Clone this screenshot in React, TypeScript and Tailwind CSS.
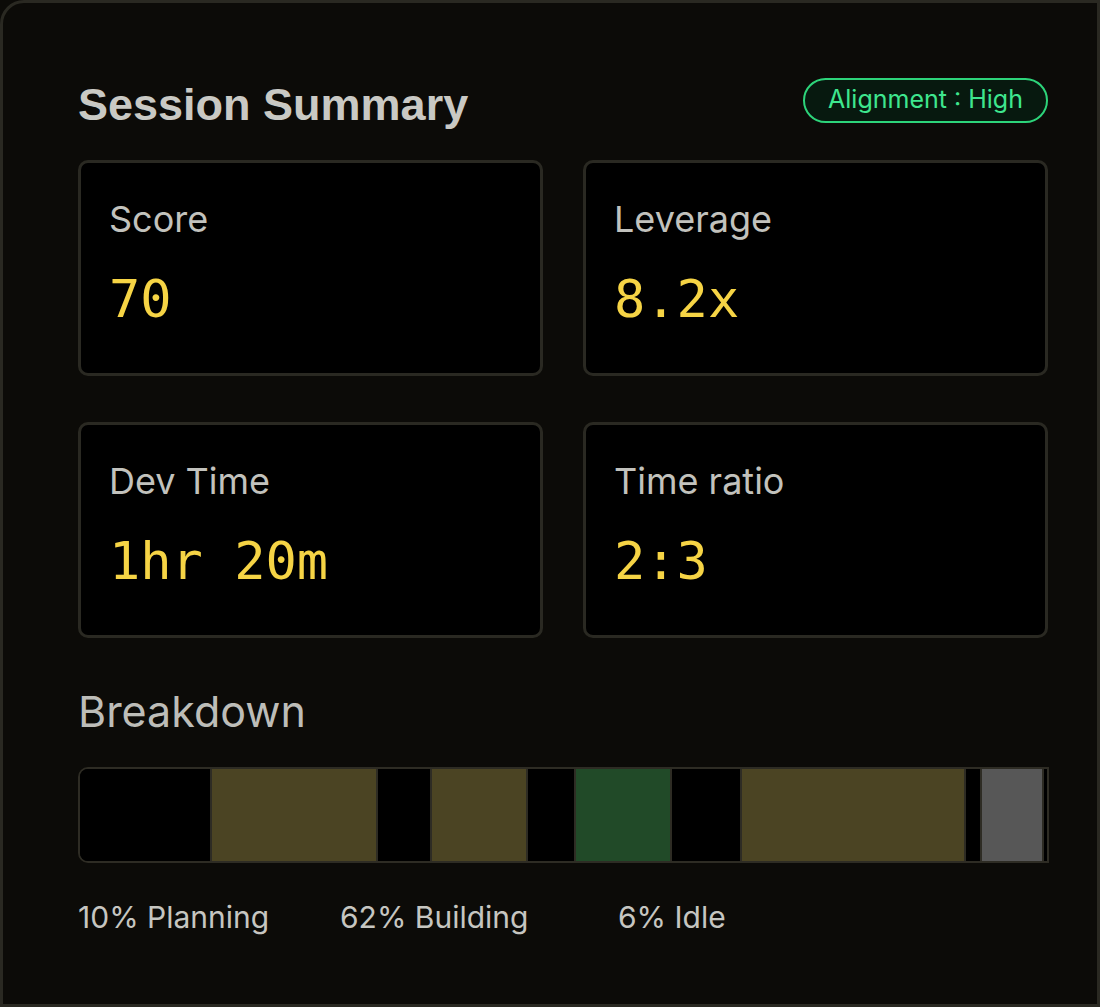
import React from "react";

const segments = [
  { w: 130, c: "bg-black" },
  { w: 166, c: "bg-[#4b4423]" },
  { w: 54, c: "bg-black" },
  { w: 96, c: "bg-[#4b4423]" },
  { w: 48, c: "bg-black" },
  { w: 96, c: "bg-[#214a28]" },
  { w: 70, c: "bg-black" },
  { w: 224, c: "bg-[#4b4423]" },
  { w: 16, c: "bg-black" },
  { w: 62, c: "bg-[#575757]" },
  { w: 5, c: "bg-black" },
];

function Card({ label, value }: { label: string; value: string }) {
  return (
    <div className="h-[216px] rounded-[10px] border-[3px] border-[#2a2922] bg-black pl-[28px] pt-[34px]">
      <div className="text-[36px] leading-[44px] text-[#c2c2bd] [font-family:Inter,sans-serif]">
        {label}
      </div>
      <div className="mt-[28px] text-[52px] leading-[60px] text-[#f6d445] [font-family:'DejaVu_Sans_Mono',monospace]">
        {value}
      </div>
    </div>
  );
}

export default function App() {
  return (
    <div className="h-[1007px] w-[1100px] overflow-hidden bg-[#0c0b08]">
      <div className="h-[1007px] w-[1100px] rounded-tl-[24px] border-[3px] border-[#2a2922] bg-[#0c0b08] pl-[75px] pr-[49px] pt-[72px] [font-family:Inter,sans-serif]">
        <div className="flex h-[60px] items-center justify-between">
          <div className="text-[45px] font-bold leading-[60px] text-[#c9c9c4] [font-family:'Liberation_Sans',Arial,sans-serif]">
            Session Summary
          </div>
          <div className="mt-[-10px] flex h-[45px] w-[245px] items-center justify-center rounded-full border-2 border-[#2dd47a] bg-[#07190f] text-[25px] text-[#3ee68e]">
            Alignment : High
          </div>
        </div>
        <div className="mt-[25px] grid grid-cols-2 gap-x-[40px] gap-y-[46px]">
          <Card label="Score" value="70" />
          <Card label="Leverage" value="8.2x" />
          <Card label="Dev Time" value="1hr 20m" />
          <Card label="Time ratio" value="2:3" />
        </div>
        <div className="mt-[45px] text-[43px] leading-[56px] text-[#bdbdb8]">Breakdown</div>
        <div className="mt-[28px] flex h-[96px] w-[971px] overflow-hidden rounded-l-[10px] border-2 border-[#2e2c24] bg-black">
          {segments.map((s, i) => (
            <div
              key={i}
              className={`h-full shrink-0 ${s.c} ${i > 0 ? "border-l-2 border-[#2e2c24]" : ""}`}
              style={{ width: s.w }}
            />
          ))}
        </div>
        <div className="mt-[34px] flex text-[30px] leading-[40px] text-[#c6c6c1]">
          <span className="w-[262px]">10% Planning</span>
          <span className="w-[278px]">62% Building</span>
          <span>6% Idle</span>
        </div>
      </div>
    </div>
  );
}
